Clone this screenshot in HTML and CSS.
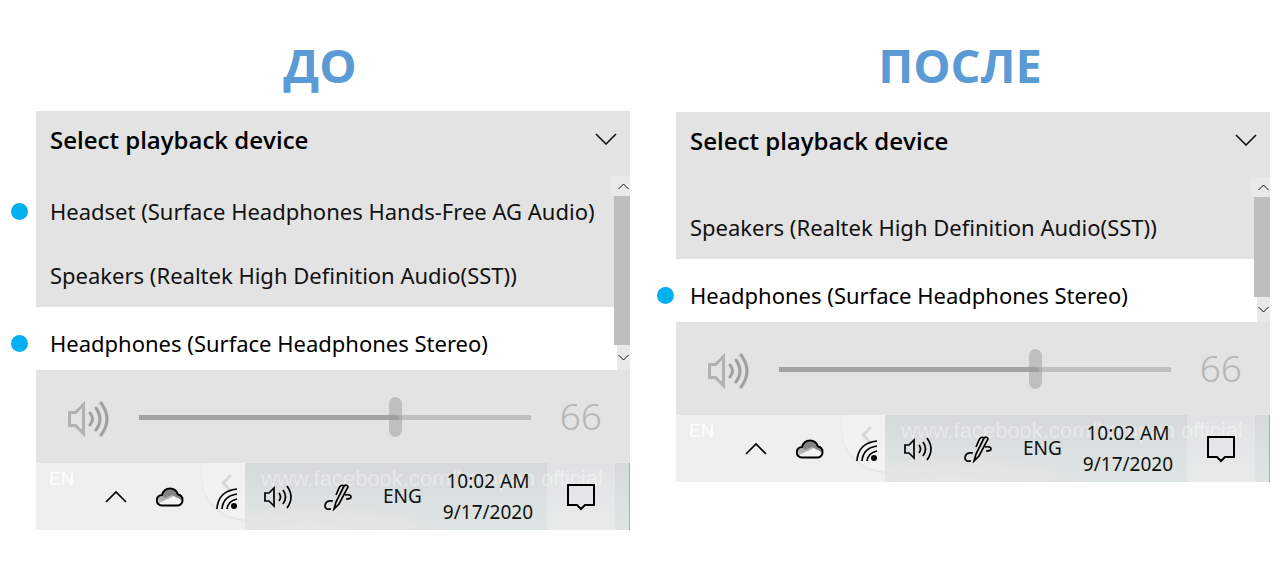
FILE: index.html
```html
<!DOCTYPE html>
<html lang="ru">
<head>
    <meta charset="UTF-8">
    <meta name="viewport" content="width=device-width, initial-scale=1.0">
    <title>Select playback device</title>
    <link rel="stylesheet" href="styles.css">
</head>
<body>
    <!-- shared icons -->
    <svg class="sprite" aria-hidden="true">
        <symbol id="down" viewBox="0 0 22 12"><path d="M1 1l10 10L21 1"/></symbol>
        <symbol id="up" viewBox="0 0 22 12"><path d="M1 11L11 1l10 10"/></symbol>
        <symbol id="speaker" viewBox="0 0 42 36">
            <path opacity="0.75" d="M1.5 11.5h6l8-8v29l-8-8h-6z"/>
            <path d="M22 12q5 6 0 12M28 7q8 11 0 22M33 2q12 16 0 32"/>
        </symbol>
        <symbol id="speaker-small" viewBox="0 0 28 24">
            <path d="M1 8h4l5-5v18l-5-5H1z"/>
            <path d="M15 8q3 4 0 8M19 5q5 7 0 14M23 1q8 11 0 22"/>
        </symbol>
        <symbol id="cloud" viewBox="0 0 28 20">
            <path fill="#f4f4f4" stroke="none" d="M6 18a5 5 0 0 1 0-10q2-6 8-7 6 0 8 6a6 6 0 0 1 0 11z"/>
            <path fill="#b4b4b4" stroke="none" d="M2 12q1-4 5-4 7-4 11 1L3 16z"/>
            <path fill="#858585" stroke="none" d="M5 8q3-7 9-7 6 0 8 6 4 1 5 7l-11-6-7 3z"/>
            <path d="M6 18.5a5 5 0 0 1 0-10.5q2-6.5 8-6.500 6 0 8 6a5.600 5.600 0 0 1 0 11z"/>
        </symbol>
        <symbol id="wifi" viewBox="0 0 22 22">
            <path d="M1 21Q2 3 21 1M6 21Q7 8 21 6M11 21Q12 13 21 11"/>
            <circle cx="18" cy="18" r="3" fill="#000" stroke="none"/>
        </symbol>
        <symbol id="pen" viewBox="0 0 28 28">
            <path d="M10 26l2-7L20 3q3-2 4 1L15 21zM20 3q-3-2-5 2l-3 7M21 12q6-1 6 2 0 2-5 2M9 18q-8-1-8 5 0 4 6 3"/>
        </symbol>
        <symbol id="note" viewBox="0 0 28 26"><path d="M1 1h26v20h-9l-4 4-4-4H1z"/></symbol>
    </svg>

    <main class="compare">
        <section class="side">
            <h1>ДО</h1>
            <div class="panel">
                <button class="picker">Select playback device <svg class="chevron"><use href="#down"/></svg></button>
                <div class="device-list">
                    <div class="devices">
                        <button class="device marked">Headset (Surface Headphones Hands-Free AG Audio)</button>
                        <button class="device">Speakers (Realtek High Definition Audio(SST))</button>
                        <button class="device selected marked">Headphones (Surface Headphones Stereo)</button>
                    </div>
                    <div class="scrollbar">
                        <button class="scroll-up" aria-label="Up"><svg><use href="#up"/></svg></button>
                        <div class="scroll-thumb"></div>
                        <button class="scroll-down" aria-label="Down"><svg><use href="#down"/></svg></button>
                    </div>
                </div>
                <div class="volume">
                    <svg class="volume-icon"><use href="#speaker"/></svg>
                    <input type="range" min="0" max="100" value="66" aria-label="Volume">
                    <output>66</output>
                </div>
                <footer class="taskbar">
                    <div class="ghost ghost-lang">EN</div>
                    <div class="ghost-circle"><svg><path d="M10 1L2 9l8 8"/></svg></div>
                    <div class="glass"><div class="ghost">www.facebook.com/kompan official</div></div>
                    <div class="tray">
                        <button class="tray-up" aria-label="Hidden icons"><svg><use href="#up"/></svg></button>
                        <button class="tray-cloud" aria-label="OneDrive"><svg><use href="#cloud"/></svg></button>
                        <button class="tray-wifi" aria-label="Network"><svg><use href="#wifi"/></svg></button>
                        <button class="tray-sound" aria-label="Sound"><svg><use href="#speaker-small"/></svg></button>
                        <button class="tray-pen" aria-label="Ink"><svg><use href="#pen"/></svg></button>
                        <button class="tray-lang">ENG</button>
                        <button class="tray-clock">10:02 AM<br>9/17/2020</button>
                        <button class="tray-note" aria-label="Notifications"><svg><use href="#note"/></svg></button>
                    </div>
                </footer>
            </div>
        </section>

        <section class="side after">
            <h1>ПОСЛЕ</h1>
            <div class="panel">
                <button class="picker">Select playback device <svg class="chevron"><use href="#down"/></svg></button>
                <div class="device-list">
                    <div class="devices">
                        <button class="device">Speakers (Realtek High Definition Audio(SST))</button>
                        <button class="device selected marked">Headphones (Surface Headphones Stereo)</button>
                    </div>
                    <div class="scrollbar">
                        <button class="scroll-up" aria-label="Up"><svg><use href="#up"/></svg></button>
                        <div class="scroll-thumb"></div>
                        <button class="scroll-down" aria-label="Down"><svg><use href="#down"/></svg></button>
                    </div>
                </div>
                <div class="volume">
                    <svg class="volume-icon"><use href="#speaker"/></svg>
                    <input type="range" min="0" max="100" value="66" aria-label="Volume">
                    <output>66</output>
                </div>
                <footer class="taskbar">
                    <div class="ghost ghost-lang">EN</div>
                    <div class="ghost-circle"><svg><path d="M10 1L2 9l8 8"/></svg></div>
                    <div class="glass"><div class="ghost">www.facebook.com/kompan official</div></div>
                    <div class="tray">
                        <button class="tray-up" aria-label="Hidden icons"><svg><use href="#up"/></svg></button>
                        <button class="tray-cloud" aria-label="OneDrive"><svg><use href="#cloud"/></svg></button>
                        <button class="tray-wifi" aria-label="Network"><svg><use href="#wifi"/></svg></button>
                        <button class="tray-sound" aria-label="Sound"><svg><use href="#speaker-small"/></svg></button>
                        <button class="tray-pen" aria-label="Ink"><svg><use href="#pen"/></svg></button>
                        <button class="tray-lang">ENG</button>
                        <button class="tray-clock">10:02 AM<br>9/17/2020</button>
                        <button class="tray-note" aria-label="Notifications"><svg><use href="#note"/></svg></button>
                    </div>
                </footer>
            </div>
        </section>
    </main>
</body>
</html>
```
FILE: styles.css
```css
* {
    box-sizing: border-box;
}
body {
    font-family: "Noto Sans", "Open Sans", sans-serif;
    background: #fff;
    color: #111;
    margin: 0;
}
.sprite {
    position: absolute;
    width: 0;
    height: 0;
}
svg {
    display: block;
    fill: none;
    stroke: #111;
    stroke-width: 2;
}
button {
    font: inherit;
    color: inherit;
    background: none;
    border: none;
    padding: 0;
    margin: 0;
    text-align: left;
    cursor: pointer;
}
.compare {
    display: grid;
    grid-template-columns: 1fr 1fr;
    padding-top: 31px;
}
h1 {
    margin: 0 0 12px;
    font-family: "Open Sans", sans-serif;
    font-size: 47px;
    line-height: 68px;
    font-weight: 700;
    color: #5b9bd5;
    text-align: center;
}
.after h1 {
    margin-bottom: 13px;
}
.panel {
    margin: 0 10px 0 36px;
    background: #e3e3e3;
}
.picker {
    display: flex;
    justify-content: space-between;
    align-items: center;
    width: 100%;
    height: 65px;
    padding: 0 13px 8px 14px;
    font-family: "Open Sans", sans-serif;
    font-size: 24px;
    font-weight: 600;
    color: #000;
}
.chevron {
    width: 22px;
    height: 12px;
    margin-bottom: 2px;
    stroke-width: 1.6;
}
.device-list {
    display: flex;
    align-items: stretch;
}
.devices {
    flex: 1;
    padding-top: 3px;
}
.device {
    display: block;
    position: relative;
    width: 100%;
    height: 64px;
    padding-left: 14px;
    font-size: 22px;
    white-space: nowrap;
}
.after .devices {
    padding-top: 18px;
}
.device.selected {
    height: 63px;
    background: #fff;
    color: #000;
    padding-top: 8px;
}
/* the blue dot sits outside the panel */
.marked::before {
    content: "";
    position: absolute;
    left: -25px;
    top: 24px;
    width: 17px;
    height: 17px;
    border-radius: 50%;
    background: #00b0f0;
}
.marked.selected::before {
    top: 28px;
}
.after .marked.selected::before {
    left: -19px;
}
.scrollbar {
    display: flex;
    flex-direction: column;
    align-items: flex-end;
    width: 13px;
    background: #e8e8e8;
    z-index: 1;
}
.scroll-up, .scroll-down {
    display: flex;
    align-items: center;
    justify-content: center;
    height: 20px;
    background: #e9e9e9;
}
.scroll-up {
    width: 19px;
    padding-left: 6px;
}
.scroll-down {
    width: 13px;
    height: 25px;
}
.scrollbar svg {
    width: 11px;
    height: 7px;
}
.scroll-thumb {
    flex: 1;
    width: 16px;
    background: #bebebe;
}
.volume {
    display: flex;
    align-items: center;
    height: 93px;
    padding: 0 28px 0 32px;
}
.volume-icon {
    width: 42px;
    height: 36px;
    margin-top: 4px;
    stroke: #a0a0a0;
    stroke-width: 3;
    stroke-linecap: round;
}
input[type=range] {
    -webkit-appearance: none;
    appearance: none;
    flex: 1;
    min-width: 0;
    height: 40px;
    margin: 2px 29px 0 29px;
    background: none;
}
input[type=range]::-webkit-slider-runnable-track {
    height: 5px;
    background: linear-gradient(to right, #a2a2a2 66%, #bfbfbf 66%);
}
input[type=range]::-webkit-slider-thumb {
    -webkit-appearance: none;
    width: 13px;
    height: 40px;
    margin-top: -18px;
    border-radius: 7px;
    background: rgba(155, 155, 155, 0.5);
}
output {
    font-family: "Noto Sans", sans-serif;
    font-size: 37px;
    line-height: 48px;
    font-weight: 300;
    color: #b5b5b5;
    margin-bottom: 2px;
}
.taskbar {
    display: grid;
    grid-template-columns: 209px 1fr;
    grid-template-rows: 67px;
    overflow: hidden;
    background: #efefef;
}
.ghost {
    font-family: "Liberation Sans", Arial, sans-serif;
    font-size: 22px;
    line-height: 32px;
    white-space: nowrap;
    color: rgba(255, 255, 255, 0.4);
}
.ghost-lang {
    grid-area: 1 / 1;
    padding-left: 13px;
    font-size: 18px;
    color: #fff;
}
.ghost-circle {
    grid-area: 1 / 1;
    justify-self: end;
    width: 44px;
    height: 58px;
    padding: 11px 0 0 19px;
    border-radius: 0 0 0 44px;
    border-left: 1px solid #e8e8e8;
    border-bottom: 2px solid #e6e6e6;
    background: #f2f2f2;
}
.ghost-circle svg {
    width: 12px;
    height: 18px;
    stroke: #d8d8d8;
    stroke-width: 3;
}
.glass {
    grid-area: 1 / 2;
    min-width: 0;
    padding-left: 16px;
    border-right: 1px solid #a8acac;
    background: linear-gradient(to right, transparent 302px, rgba(255, 255, 255, 0.25) 302px, rgba(255, 255, 255, 0.25) 370px, transparent 370px),
        radial-gradient(ellipse at 16% 100%, #e6e6e5 0, rgba(230, 230, 229, 0) 30%),
        linear-gradient(to bottom, #d5d9da, #dfe5e4);
}
.tray {
    grid-area: 1 / 1 / 2 / 3;
    display: flex;
    align-items: center;
    padding-left: 69px;
    font-size: 19px;
    line-height: 31px;
    color: #111;
    z-index: 1;
}
.tray svg {
    width: 28px;
    height: 28px;
    stroke: #000;
    stroke-width: 1.7;
}
.tray .tray-up svg {
    width: 22px;
    height: 12px;
}
.tray .tray-cloud svg {
    height: 20px;
    margin: 0 32px 0 29px;
    stroke-width: 2;
}
.tray .tray-wifi svg {
    width: 22px;
    height: 22px;
    margin-top: 4px;
}
.tray .tray-sound svg {
    height: 24px;
    margin: 0 32px 0 26px;
}
.tray-lang {
    margin: 0 21px 0 31px;
}
.tray-clock {
    text-align: center;
}
.tray-note {
    margin-left: auto;
    margin-right: 35px;
}
.tray .tray-note svg {
    stroke-width: 2;
}
```
